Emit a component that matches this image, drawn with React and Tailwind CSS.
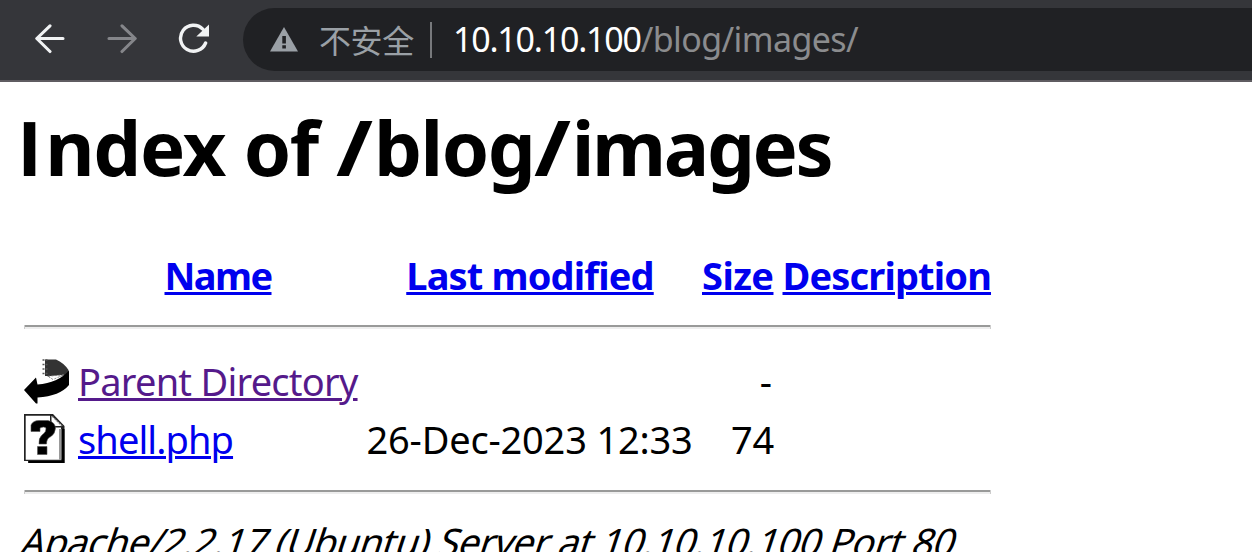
const ROW = "grid grid-cols-[45.5px_280px_327px_72px_208.5px] gap-x-[8.5px] whitespace-nowrap text-[38px]";
const LINK = "underline decoration-[3px] underline-offset-[2px]";
const SLASH = "inline-block origin-left scale-x-[1.17] tracking-[6px]";

function BackIcon() {
  return (
    <svg width="30" height="30" viewBox="0 0 30 30" fill="none" stroke="#f1f3f4" strokeWidth="3.1" strokeLinecap="round" strokeLinejoin="round">
      <path d="M28 14.5H2.2M15 1.8L1.8 14.5L15 27.5" />
    </svg>
  );
}

function ForwardIcon() {
  return (
    <svg width="30" height="30" viewBox="0 0 30 30" fill="none" stroke="#85868a" strokeWidth="3.1" strokeLinecap="round" strokeLinejoin="round">
      <path d="M2 14.5H27.8M15 1.8L28.2 14.5L15 27.5" />
    </svg>
  );
}

function ReloadIcon() {
  return (
    <svg width="32" height="32" viewBox="0 0 32 32" fill="none">
      <path d="M24.8 6.1A13 13 0 1 0 27.6 20" stroke="#f1f3f4" strokeWidth="3.4" strokeLinecap="round" />
      <path d="M31 1.5V13.5H18.3Z" fill="#f1f3f4" />
    </svg>
  );
}

function WarningIcon() {
  return (
    <svg width="28" height="25" viewBox="0 0 28 25">
      <path d="M14 0L28 24.5H0Z" fill="#9aa0a6" />
      <path d="M12.3 9H15.9V16.6H12.3ZM12.3 18.2H15.9V21.6H12.3Z" fill="#202124" />
    </svg>
  );
}

function ParentIcon() {
  return (
    <svg className="mt-[6px]" width="45" height="47" viewBox="0 0 45 47">
      <path d="M21 1.5H32Q40 5 44.5 12V15L40 17.5L28 20.5L23 18H21Z" fill="#333" />
      <path d="M18.5 2H24M18.5 6.5H24M18.5 11H24M18.5 15.5H24" stroke="#555" strokeWidth="1.6" strokeDasharray="2 1" />
      <path d="M24 18.2L40 16.8L29 21.5Z" fill="#fff" stroke="#777" strokeWidth="0.8" strokeDasharray="2 1.5" />
      <path d="M0 32L12 19.5L13.5 26.5Q34 25 45 12.5V27Q36 38 13.5 39.5V45.5H12Z" fill="#000" />
    </svg>
  );
}

function UnknownIcon() {
  return (
    <svg className="mt-[4px]" width="41" height="49" viewBox="0 0 41 49">
      <path d="M0 0H29L40.5 12V49H4V47H0Z" fill="#222" />
      <path d="M5 47H37.5V15H40.5V49H5Z" fill="#000" />
      <path d="M1.7 1.7H26V13.5H37V45.7H1.7Z" fill="#fff" />
      <path d="M35 15H37.6V45.7H35Z" fill="#999" />
      <path d="M27.5 1.7L38.5 12H27.5Z" fill="#fff" />
      <path d="M28.5 2.5L38 12" stroke="#777" strokeWidth="1.2" strokeDasharray="2 1" />
      <path d="M7 11Q9 6.5 15 6.5H24Q31 8 31.5 14Q31 20 27 22.5Q22.5 24 22.5 30H15Q14.5 24 18 21Q22.5 18 22 14Q20 12 16 14V17.5H7ZM13.5 32.5H23V40.5H13.5Z" fill="#000" stroke="#555" strokeWidth="0.6" />
    </svg>
  );
}

function Rule() {
  return (
    <div className="ml-[2px] w-[967px] border-x border-x-[#ccc]">
      <div className="h-[2px] bg-[#999a99]" />
      <div className="h-[2px] bg-[#eee]" />
    </div>
  );
}

export default function App() {
  return (
    <div className="h-[552px] w-full overflow-hidden bg-white font-['Noto_Sans','Noto_Sans_CJK_SC',sans-serif] text-black">
      <header className="flex h-[82px] items-start border-b-2 border-[#5f5c61] bg-[#35363a] pl-[35px] pt-2">
        <div className="flex h-[61px] shrink-0 items-center">
          <BackIcon />
          <div className="ml-[42px]"><ForwardIcon /></div>
          <div className="ml-[41px]"><ReloadIcon /></div>
        </div>
        <div className="ml-[33px] flex h-[63px] flex-1 items-center rounded-l-full bg-[#202124] pl-[27px]">
          <WarningIcon />
          <span className="ml-[21px] w-[96px] whitespace-nowrap font-['Noto_Sans_CJK_SC',sans-serif] text-[32px] leading-[63px] tracking-[-0.4px] text-[#9aa0a6]">不安全</span>
          <span className="ml-[15px] h-9 w-[2px] bg-[#77797c]" />
          <span className="ml-[21px] whitespace-nowrap pb-[2px] text-[34px] leading-[60px]">
            <span className="tracking-[-1.22px] text-white">10.10.10.100</span>
            <span className="tracking-[-0.6px] text-[#8b8c8e]">/blog/images/</span>
          </span>
        </div>
      </header>

      <main className="pl-[22px] pt-[21px]">
        <h1 className="-ml-[5px] h-[88px] whitespace-nowrap text-[76px] font-bold leading-[88px]">
          <span className="font-['Open_Sans',sans-serif] tracking-[3px]">I</span>
          <span className="tracking-[-1.3px]">ndex of </span>
          <span className={SLASH}>/</span>
          <span className="tracking-[-1.5px]">blog</span>
          <span className={SLASH}>/</span>
          <span className="tracking-[-2.4px]">images</span>
        </h1>

        <div className="ml-[2px] mt-[60px] font-bold leading-[48px] text-[#0000ee]">
          <div className={ROW}>
            <span />
            <span className="text-center"><a className={`${LINK} tracking-[-1.6px]`}>Name</a></span>
            <span className="text-center"><a className={`${LINK} tracking-[-0.84px]`}>Last modified</a></span>
            <span><a className={`${LINK} tracking-[-0.56px]`}>Size</a></span>
            <span><a className={`${LINK} tracking-[-0.85px]`}>Description</a></span>
          </div>
        </div>
        <div className="mt-[26px]"><Rule /></div>

        <div className="ml-[2px] mt-[23px] leading-[58px]">
          <div className={ROW}>
            <ParentIcon />
            <span><a className={`${LINK} tracking-[-0.76px] text-[#551a8b]`}>Parent Directory</a></span>
            <span />
            <span className="pr-[2px] text-right">-</span>
            <span />
          </div>
          <div className={ROW}>
            <UnknownIcon />
            <span><a className={`${LINK} tracking-[-0.9px] text-[#0000ee]`}>shell.php</a></span>
            <span className="tracking-[-0.19px]">26-Dec-2023 12:33</span>
            <span className="text-right tracking-[-0.24px]">74</span>
            <span />
          </div>
        </div>
        <div className="mt-[22px]"><Rule /></div>

        <address className="-ml-[4px] mt-[22px] w-fit origin-[0_40px] -skew-x-[18deg] whitespace-nowrap text-[38px] not-italic leading-[50px] tracking-[-0.6px]">
          Apache/2.2.17 (Ubuntu) Server at 10.10.10.100 Port 80
        </address>
      </main>
    </div>
  );
}
